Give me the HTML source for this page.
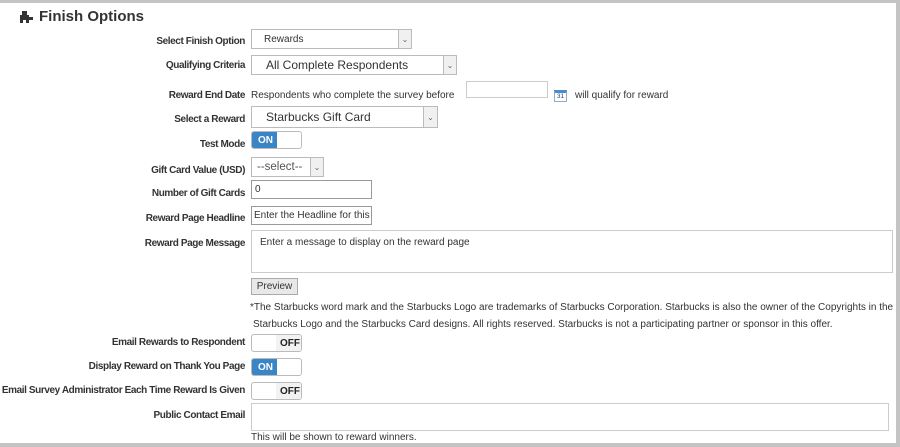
<!DOCTYPE html>
<html><head><style>
*{box-sizing:border-box;margin:0;padding:0}
body{width:900px;height:447px;background:#fff;position:relative;overflow:hidden;font-family:"Liberation Sans",sans-serif;color:#333}
.a{position:absolute}
.l{position:absolute;right:655px;font-size:10px;font-weight:bold;color:#333;white-space:nowrap;letter-spacing:-0.4px;margin-top:2px}
.box{position:absolute;border:1px solid #ccc;background:#fff}
.sel{position:absolute;border:1px solid #bbb;background:#fff;font-size:10.5px;color:#333;padding-left:12px;display:flex;align-items:center}
.sel .ar{position:absolute;right:0;top:0;bottom:0;width:13px;border-left:1px solid #bbb;background:#f0f0f0;font-size:8px;color:#666;display:flex;align-items:center;justify-content:center}
.tg{position:absolute;left:251px;width:51px;height:18px;border:1px solid #bbb;border-radius:3px;background:#fff;font-size:10px;font-weight:bold;overflow:hidden}
.tg .on{position:absolute;left:0;top:0;bottom:0;width:25px;background:#3a85c6;color:#fff;padding-left:6px;line-height:17px}
.tg .off{position:absolute;right:0;top:0;bottom:0;width:25px;background:#f2f2f2;color:#222;padding-left:4px;line-height:17px}
.t{position:absolute;font-size:10px;color:#333;white-space:nowrap;margin-top:2px}
</style></head><body>
<div class="a" style="left:0;top:0;width:900px;height:3px;background:#c4c4c4"></div>
<div class="a" style="right:0;top:0;width:4px;height:447px;background:#c4c4c4"></div>
<div class="a" style="left:0;top:443px;width:900px;height:4px;background:#c4c4c4"></div>
<svg class="a" style="left:19px;top:10px" width="15" height="13" viewBox="0 0 15 13"><path d="M1 5h9v8H7V10H4v3H1z M3 1h5v4H3z M10 7h4v3h-4z" fill="#333"/></svg>
<div class="a" style="left:39px;top:8px;font-size:15px;font-weight:bold;color:#333">Finish Options</div>

<div class="l" style="top:34px">Select Finish Option</div>
<div class="sel" style="left:251px;top:29px;width:161px;height:20px;font-size:10px">Rewards<div class="ar">⌄</div></div>

<div class="l" style="top:58px">Qualifying Criteria</div>
<div class="sel" style="left:251px;top:55px;width:206px;height:20px;font-size:12px;padding-left:14px">All Complete Respondents<div class="ar">⌄</div></div>

<div class="l" style="top:88px">Reward End Date</div>
<div class="t" style="left:251px;top:88px">Respondents who complete the survey before</div>
<div class="box" style="left:466px;top:81px;width:82px;height:17px"></div>
<div class="a" style="left:554px;top:90px;width:13px;height:12px;border:1px solid #9ab;background:#fff;font-size:6px;text-align:center;line-height:9px;border-top:3px solid #4a8ad4;color:#235">31</div>
<div class="t" style="left:575px;top:88px">will qualify for reward</div>

<div class="l" style="top:112px">Select a Reward</div>
<div class="sel" style="left:251px;top:106px;width:187px;height:22px;font-size:12px;padding-left:14px">Starbucks Gift Card<div class="ar" style="width:14px">⌄</div></div>

<div class="l" style="top:137px">Test Mode</div>
<div class="tg" style="top:131px"><div class="on">ON</div></div>

<div class="l" style="top:163px">Gift Card Value (USD)</div>
<div class="sel" style="left:251px;top:157px;width:73px;height:20px;font-size:11.5px;padding-left:5px;color:#555">--select--<div class="ar">⌄</div></div>

<div class="l" style="top:186px">Number of Gift Cards</div>
<div class="box" style="left:251px;top:180px;width:121px;height:19px;border-color:#999;font-size:10px;padding:3px 3px">0</div>

<div class="l" style="top:211px">Reward Page Headline</div>
<div class="box" style="left:251px;top:206px;width:121px;height:19px;border-color:#999;font-size:10px;padding:3px 2px;overflow:hidden;white-space:nowrap">Enter the Headline for this</div>

<div class="l" style="top:236px">Reward Page Message</div>
<div class="box" style="left:251px;top:230px;width:642px;height:43px;font-size:10px;padding:6px 8px">Enter a message to display on the reward page</div>

<div class="a" style="left:251px;top:278px;width:47px;height:17px;border:1px solid #aaa;background:#e8e8e8;font-size:10px;text-align:center;line-height:15px">Preview</div>

<div class="t" style="left:250px;top:300px">*The Starbucks word mark and the Starbucks Logo are trademarks of Starbucks Corporation. Starbucks is also the owner of the Copyrights in the</div>
<div class="t" style="left:253px;top:317px">Starbucks Logo and the Starbucks Card designs. All rights reserved. Starbucks is not a participating partner or sponsor in this offer.</div>

<div class="l" style="top:335px">Email Rewards to Respondent</div>
<div class="tg" style="top:334px"><div class="off">OFF</div></div>

<div class="l" style="top:359px">Display Reward on Thank You Page</div>
<div class="tg" style="top:358px"><div class="on">ON</div></div>

<div class="l" style="top:383px">Email Survey Administrator Each Time Reward Is Given</div>
<div class="tg" style="top:382px"><div class="off">OFF</div></div>

<div class="l" style="top:408px">Public Contact Email</div>
<div class="box" style="left:251px;top:403px;width:638px;height:28px"></div>
<div class="t" style="left:251px;top:430px">This will be shown to reward winners.</div>
</body></html>
